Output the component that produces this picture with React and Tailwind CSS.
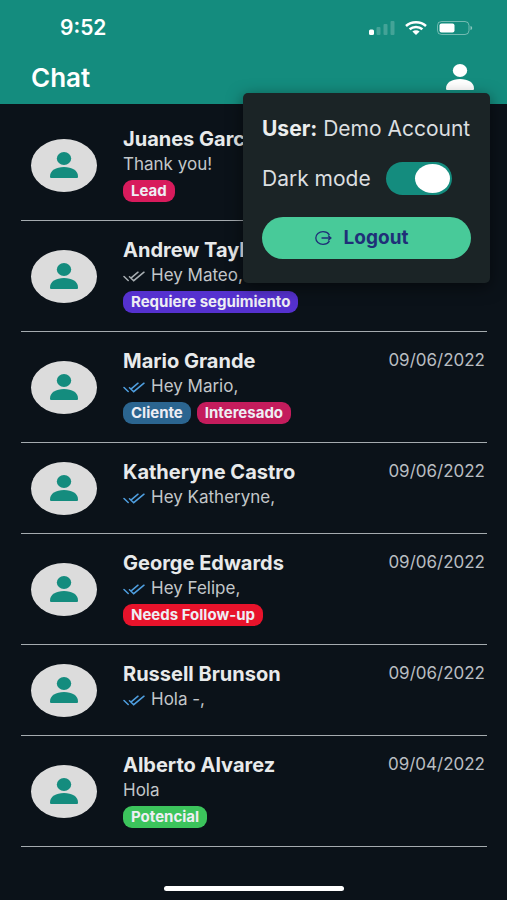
import React, { useState } from "react";

const chats = [
  {
    name: "Juanes Garcia",
    message: "Thank you!",
    tags: [{ label: "Lead", color: "bg-[#d81b5c]" }],
  },
  {
    name: "Andrew Taylor",
    message: "Hey Mateo,",
    check: "text-[#a9afb3]",
    tags: [{ label: "Requiere seguimiento", color: "bg-[#5531cf]" }],
  },
  {
    name: "Mario Grande",
    message: "Hey Mario,",
    date: "09/06/2022",
    check: "text-[#4f9fe0]",
    tags: [
      { label: "Cliente", color: "bg-[#2b6590]" },
      { label: "Interesado", color: "bg-[#c41c5c]" },
    ],
  },
  {
    name: "Katheryne Castro",
    message: "Hey Katheryne,",
    date: "09/06/2022",
    check: "text-[#4f9fe0]",
    tags: [],
  },
  {
    name: "George Edwards",
    message: "Hey Felipe,",
    date: "09/06/2022",
    check: "text-[#4f9fe0]",
    tags: [{ label: "Needs Follow-up", color: "bg-[#e8132b]" }],
  },
  {
    name: "Russell Brunson",
    message: "Hola -,",
    date: "09/06/2022",
    check: "text-[#4f9fe0]",
    tags: [],
  },
  {
    name: "Alberto Alvarez",
    message: "Hola",
    date: "09/04/2022",
    tags: [{ label: "Potencial", color: "bg-[#3cc45c]" }],
  },
];

function PersonIcon({ className }) {
  return (
    <svg viewBox="0 0 28 26" className={className} fill="currentColor" aria-hidden="true">
      <ellipse cx="14" cy="6.5" rx="7.2" ry="6.5" />
      <path d="M0 24.5C0 18.5 6 15 14 15s14 3.500 14 9.500c0 1-.5 1.500-1.500 1.500h-25C.5 26 0 25.500 0 24.500z" />
    </svg>
  );
}

function DoubleCheck({ className }) {
  return (
    <svg
      viewBox="0 0 22 11"
      className={`w-[22px] h-[11px] shrink-0 ${className}`}
      fill="none"
      stroke="currentColor"
      strokeWidth="1.5"
      strokeLinecap="round"
      aria-hidden="true"
    >
      <path d="M1 5.500l4.200 4M6.500 5.800l4.200 3.900L21 1.200M8.800 6.300L15 1.200" />
    </svg>
  );
}

function StatusBar() {
  return (
    <div className="flex items-center justify-between h-14 pl-[60px] pr-[34px]">
      <span className="text-[21px] font-semibold">9:52</span>
      <div className="flex items-center gap-[10px]">
        <svg width="26" height="14" viewBox="0 0 26 14" fill="currentColor" aria-hidden="true">
          <rect x="0" y="8.500" width="5" height="5.500" rx="1.500" />
          <rect x="7.500" y="6" width="4" height="8" rx="1" opacity="0.2" />
          <rect x="14.500" y="3" width="4" height="11" rx="1" opacity="0.2" />
          <rect x="21.500" y="0" width="4" height="14" rx="1" opacity="0.2" />
        </svg>
        <svg width="22" height="14" viewBox="0 0 22 14" fill="none" stroke="currentColor" strokeWidth="2.500" aria-hidden="true">
          <path d="M1 5C6.500 0 15.500 0 21 5" />
          <path d="M4.600 8.300c3.600-3.200 9.200-3.200 12.800 0" />
          <path d="M7.400 10.400c2-1.700 5.200-1.700 7.200 0L11 14z" fill="currentColor" stroke="none" />
        </svg>
        <svg width="36" height="14" viewBox="0 0 36 14" aria-hidden="true">
          <rect x="0.500" y="0.500" width="31.500" height="13" rx="4" fill="none" stroke="currentColor" opacity="0.4" />
          <rect x="2.500" y="2.500" width="15" height="9" rx="2" fill="currentColor" />
          <path d="M33.500 5c2.200.5 2.200 3.500 0 4z" fill="currentColor" opacity="0.5" />
        </svg>
      </div>
    </div>
  );
}

function UserMenu() {
  const [dark, setDark] = useState(true);

  return (
    <div className="absolute top-[93px] right-[17px] z-10 w-[247px] h-[190px] px-[19px] pt-[22px] rounded-[5px] bg-[#1b2426] shadow-[0_4px_16px_rgba(0,0,0,0.5)] text-[21px] text-[#dcdfe0]">
      <p className="leading-7 whitespace-nowrap">
        <b className="font-bold text-[#eceeee]">User:</b> Demo Account
      </p>
      <div className="flex items-center gap-[15px] mt-[19px] h-[33px]">
        <label htmlFor="dark-mode" className="leading-7 whitespace-nowrap">
          Dark mode
        </label>
        <input
          id="dark-mode"
          type="checkbox"
          role="switch"
          checked={dark}
          onChange={() => setDark(!dark)}
          className="appearance-none flex items-center shrink-0 w-[66px] h-[33px] px-[2px] rounded-full bg-[#5b6668] checked:bg-[#148c7e] checked:justify-end cursor-pointer before:content-[''] before:block before:w-[35px] before:h-[29px] before:rounded-[50%] before:bg-white"
        />
      </div>
      <button
        type="button"
        className="flex items-center justify-center gap-3 w-full h-[42px] mt-[22px] pr-[10px] rounded-full bg-[#48ca99] text-[#1f2f78] text-[19px] font-bold cursor-pointer"
      >
        <svg width="17" height="14" viewBox="0 0 17 14" fill="none" stroke="currentColor" strokeWidth="1.300" strokeLinecap="round" strokeLinejoin="round" aria-hidden="true">
          <path d="M14.200 3.600C13 1.800 10.700.7 8 .7 4 .7.8 3.500.8 7S4 13.300 8 13.300c2.700 0 5-1.100 6.200-2.900M7 7h9M13.500 5L16 7l-2.500 2" />
        </svg>
        Logout
      </button>
    </div>
  );
}

function ChatRow({ chat }) {
  return (
    <li className="flex min-h-[91px] pl-[10px] pr-[2px] border-b border-[#a5abaf]">
      <div className="flex items-center justify-center self-center shrink-0 w-[66px] h-[53px] rounded-[50%] bg-[#dcdcdc] text-[#148c7e]">
        <PersonIcon className="w-[28px] h-[26px]" />
      </div>
      <div className="flex-1 min-w-0 ml-[26px] pt-[17px] pb-[18px]">
        <div className="flex items-center justify-between h-6">
          <h2 className="text-xl font-bold text-[#e8eaeb] whitespace-nowrap">{chat.name}</h2>
          {chat.date && <time className="text-[17px] text-[#b9bdc1]">{chat.date}</time>}
        </div>
        <p className="flex items-center gap-[6px] h-7 text-[17px] text-[#c3c7ca]">
          {chat.check && <DoubleCheck className={chat.check} />}
          {chat.message}
        </p>
        {chat.tags.length > 0 && (
          <div className="flex gap-[6px] mt-px">
            {chat.tags.map((tag) => (
              <span
                key={tag.label}
                className={`h-[22px] px-2 rounded-[9px] text-[15px] leading-[22px] font-bold text-[#eeeef4] whitespace-nowrap ${tag.color}`}
              >
                {tag.label}
              </span>
            ))}
          </div>
        )}
      </div>
    </li>
  );
}

export default function App() {
  return (
    <div className="relative flex flex-col min-h-screen bg-[#0b1219] font-['Inter',sans-serif]">
      <header className="h-[104px] bg-[#148c7e] text-white">
        <StatusBar />
        <div className="flex items-center justify-between h-[42px] pl-[31px] pr-8">
          <h1 className="text-[26px] font-semibold">Chat</h1>
          <button type="button" aria-label="Account" className="cursor-pointer">
            <PersonIcon className="w-[30px] h-[26px]" />
          </button>
        </div>
      </header>
      <UserMenu />
      <ul className="pt-[6px] pl-[21px] pr-5">
        {chats.map((chat) => (
          <ChatRow key={chat.name} chat={chat} />
        ))}
      </ul>
      <div className="w-[180px] h-[5px] mt-auto mb-[9px] mx-auto rounded-full bg-white" />
    </div>
  );
}
